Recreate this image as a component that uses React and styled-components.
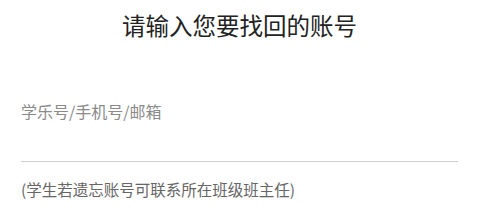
import styled, { createGlobalStyle } from "styled-components";

const GlobalStyle = createGlobalStyle`
  body {
    margin: 0;
    background: #fff;
    font-family: "Noto Sans CJK SC", "Noto Sans", sans-serif;
  }
`;

const Page = styled.main`
  display: flex;
  flex-direction: column;
  padding: 8px 22px 0 21px;
`;

const Title = styled.h1`
  margin: 0;
  text-align: center;
  font-size: 23.5px;
  font-weight: 400;
  line-height: 34px;
  color: #222;
`;

const Field = styled.label`
  display: block;
  margin-top: 57px;
  border-bottom: 1px solid #cfcfcf;
`;

const AccountInput = styled.input`
  display: block;
  width: 100%;
  box-sizing: border-box;
  border: none;
  outline: none;
  padding: 0 0 38px;
  font-family: inherit;
  font-size: 16px;
  line-height: 24px;
  color: #333;
  background: transparent;

  &::placeholder {
    color: #8a8a8a;
  }
`;

const Hint = styled.p`
  margin: 16px 0 0;
  font-size: 15.5px;
  line-height: 22px;
  color: #666;
`;

function App() {
  return (
    <>
      <GlobalStyle />
      <Page>
        <Title>请输入您要找回的账号</Title>
        <Field>
          <AccountInput placeholder="学乐号/手机号/邮箱" />
        </Field>
        <Hint>(学生若遗忘账号可联系所在班级班主任)</Hint>
      </Page>
    </>
  );
}

export default App;
